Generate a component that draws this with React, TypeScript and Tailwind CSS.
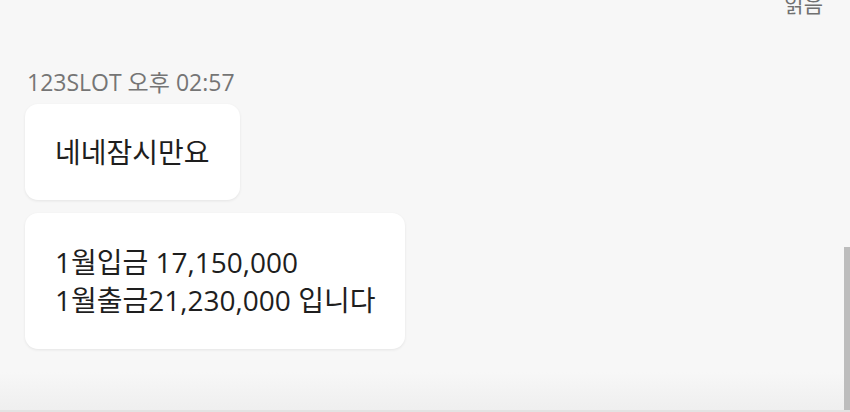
import React from 'react';

const font = { fontFamily: '"Open Sans", "Noto Sans CJK KR", sans-serif' };

const Bubble = ({ lines, className }: { lines: string[]; className: string }) => (
  <div className={`self-start bg-white rounded-[13px] shadow-[0_1px_3px_rgba(0,0,0,0.08)] pl-[30px] pr-[30px] flex flex-col justify-center text-[28px] leading-[38px] text-[#1e1e1e] ${className}`}>
    {lines.map((l) => (
      <span key={l} className="whitespace-nowrap">{l}</span>
    ))}
  </div>
);

export default function App() {
  return (
    <div className="w-[850px] h-[412px] relative overflow-hidden bg-[#f7f7f7]" style={font}>
      <div className="flex flex-col h-full">
        {/* read receipt of previous message, cut off at top */}
        <div className="flex justify-end pr-[27px] -mt-[9px] h-[26px]">
          <span className="text-[21px] leading-[26px] text-[#707070]">읽음</span>
        </div>

        <div className="flex flex-col pl-[25px] pt-[50px]">
          <div className="pl-[2px] h-[30px] text-[23px] leading-[30px] text-[#757575] whitespace-nowrap">
            123SLOT 오후 02:57
          </div>
          <div className="flex flex-col gap-[13px] mt-[7px]">
            <Bubble lines={['네네잠시만요']} className="h-[96px]" />
            <Bubble lines={['1월입금 17,150,000', '1월출금21,230,000 입니다']} className="h-[136px]" />
          </div>
        </div>

        <div className="mt-auto h-[40px] bg-gradient-to-b from-[#f7f7f7] to-[#efefef] border-b-[2px] border-[#e3e3e3]" />
      </div>

      {/* scrollbar thumb */}
      <div className="absolute right-0 top-[247px] w-[6px] h-[163px] bg-[#bdbdbd]" />
    </div>
  );
}
